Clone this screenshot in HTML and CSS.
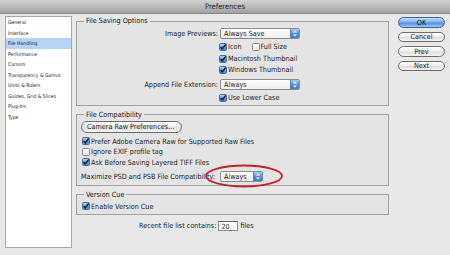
FILE: index.html
```html
<!DOCTYPE html>
<html>
<head>
<meta charset="utf-8">
<link rel="stylesheet" href="styles.css">
</head>
<body>
<div class="titlebar">Preferences</div>
<div class="main">
  <ul class="sidebar">
    <li>General</li>
    <li>Interface</li>
    <li class="sel">File Handling</li>
    <li>Performance</li>
    <li>Cursors</li>
    <li>Transparency &amp; Gamut</li>
    <li>Units &amp; Rulers</li>
    <li>Guides, Grid &amp; Slices</li>
    <li>Plug-Ins</li>
    <li>Type</li>
  </ul>

  <div class="content">
    <fieldset class="group fso">
      <legend>File Saving Options</legend>
      <div class="row r1">
        <span class="lbl">Image Previews:</span>
        <span class="popup"><span class="ptext">Always Save</span><span class="stepper"><svg viewBox="0 0 8 9" width="8" height="9"><path d="M2 3.6 4 1.4 6 3.6Z M2 5.4 4 7.6 6 5.4Z" fill="#fff"/></svg></span></span>
      </div>
      <div class="row r2">
        <span class="spacer"></span>
        <span class="cb on"><svg viewBox="0 0 8 8"><path d="M1.6 4.1 3.3 6 6.7 1.3" fill="none" stroke="#101828" stroke-width="1.4"/></svg></span><span>Icon</span>
        <span class="cb off gap"></span><span>Full Size</span>
      </div>
      <div class="row r3">
        <span class="spacer"></span>
        <span class="cb on"><svg viewBox="0 0 8 8"><path d="M1.6 4.1 3.3 6 6.7 1.3" fill="none" stroke="#101828" stroke-width="1.4"/></svg></span><span>Macintosh Thumbnail</span>
      </div>
      <div class="row r4">
        <span class="spacer"></span>
        <span class="cb on"><svg viewBox="0 0 8 8"><path d="M1.6 4.1 3.3 6 6.7 1.3" fill="none" stroke="#101828" stroke-width="1.4"/></svg></span><span>Windows Thumbnail</span>
      </div>
      <div class="row r5">
        <span class="lbl">Append File Extension:</span>
        <span class="popup"><span class="ptext">Always</span><span class="stepper"><svg viewBox="0 0 8 9" width="8" height="9"><path d="M2 3.6 4 1.4 6 3.6Z M2 5.4 4 7.6 6 5.4Z" fill="#fff"/></svg></span></span>
      </div>
      <div class="row r6">
        <span class="spacer"></span>
        <span class="cb on"><svg viewBox="0 0 8 8"><path d="M1.6 4.1 3.3 6 6.7 1.3" fill="none" stroke="#101828" stroke-width="1.4"/></svg></span><span>Use Lower Case</span>
      </div>
    </fieldset>

    <fieldset class="group compat">
      <legend>File Compatibility</legend>
      <div class="pill crp">Camera Raw Preferences...</div>
      <div class="crow c1">
        <span class="cb on"><svg viewBox="0 0 8 8"><path d="M1.6 4.1 3.3 6 6.7 1.3" fill="none" stroke="#101828" stroke-width="1.4"/></svg></span><span>Prefer Adobe Camera Raw for Supported Raw Files</span>
      </div>
      <div class="crow">
        <span class="cb off"></span><span>Ignore EXIF profile tag</span>
      </div>
      <div class="crow">
        <span class="cb on"><svg viewBox="0 0 8 8"><path d="M1.6 4.1 3.3 6 6.7 1.3" fill="none" stroke="#101828" stroke-width="1.4"/></svg></span><span>Ask Before Saving Layered TIFF Files</span>
      </div>
      <div class="row maxrow">
        <span class="maxlbl">Maximize PSD and PSB File Compatibility:</span>
        <span class="popup small"><span class="ptext">Always</span><span class="stepper"><svg viewBox="0 0 8 9" width="8" height="9"><path d="M2 3.6 4 1.4 6 3.6Z M2 5.4 4 7.6 6 5.4Z" fill="#fff"/></svg></span></span>
        <svg class="ring" viewBox="0 0 80 24" width="80" height="24"><ellipse cx="40" cy="12" rx="38" ry="10.5" fill="none" stroke="#c8202b" stroke-width="1.8"/></svg>
      </div>
    </fieldset>

    <fieldset class="group vc">
      <legend>Version Cue</legend>
      <div class="crow vrow">
        <span class="cb on"><svg viewBox="0 0 8 8"><path d="M1.6 4.1 3.3 6 6.7 1.3" fill="none" stroke="#101828" stroke-width="1.4"/></svg></span><span>Enable Version Cue</span>
      </div>
    </fieldset>

    <div class="recent">
      <span>Recent file list contains:</span>
      <span class="field">20</span>
      <span>files</span>
    </div>
  </div>

  <div class="buttons">
    <div class="pill btn ok">OK</div>
    <div class="pill btn">Cancel</div>
    <div class="pill btn">Prev</div>
    <div class="pill btn">Next</div>
  </div>
</div>
</body>
</html>
```

FILE: styles.css
```css
* { box-sizing: border-box; }

body {
  margin: 0;
  width: 450px;
  height: 255px;
  overflow: hidden;
  background: #e8e8e8;
  font-family: "DejaVu Sans Condensed", "Liberation Sans", sans-serif;
  font-size: 7.2px;
  color: #1c1c1c;
}

.titlebar {
  height: 14px;
  background: linear-gradient(#d2d2d2, #a2a2a2);
  border-bottom: 1px solid #858585;
  text-align: center;
  line-height: 13px;
  font-size: 7.6px;
  color: #1e1e1e;
}

.main {
  display: flex;
  align-items: flex-start;
}

.sidebar {
  list-style: none;
  margin: 2px 0 0 5px;
  padding: 0;
  width: 67px;
  height: 232px;
  background: #fff;
  border: 1px solid #a8a8a8;
  font-size: 5.1px;
  color: #222;
}

.sidebar li {
  height: 10.5px;
  line-height: 10.5px;
  padding-left: 2px;
  white-space: nowrap;
}

.sidebar li.sel { background: #b6d2f4; }

.content {
  margin-left: 4px;
  width: 313px;
}

.group {
  margin: 2px 0 0;
  padding: 0;
  min-width: 0;
  border: 1px solid #a2a2a2;
  background: #e4e4e4;
}

.group legend {
  margin-left: 7px;
  padding: 0 2px;
  height: 10px;
  line-height: 10px;
  color: #111;
}

.row {
  display: flex;
  align-items: center;
  height: 11px;
  white-space: nowrap;
}

.lbl {
  width: 141px;
  flex: none;
  margin-right: 2px;
  text-align: right;
}

.spacer { width: 142px; flex: none; }

.fso .r1 { margin-top: 2px; }
.fso .r2 { margin-top: 2px; }
.fso .r3 { margin-top: 1px; }
.fso .r5 { margin-top: 4px; }
.fso .r6 { margin-top: 2px; }
.fso { padding-bottom: 1.5px; }

.popup {
  display: flex;
  align-items: center;
  flex: none;
  width: 80px;
  height: 11px;
  border: 1px solid #8c8c8c;
  border-radius: 2px;
  background: linear-gradient(#ffffff, #ededed);
  overflow: hidden;
}

.popup.small { width: 43px; }

.ptext {
  flex: 1;
  padding-left: 3px;
  line-height: 9px;
}

.stepper {
  width: 9px;
  height: 9px;
  display: flex;
  align-items: center;
  justify-content: center;
  background: linear-gradient(#a8cbf3, #4a8ad8 55%, #3e7fd2);
  border-left: 1px solid #5a7fb0;
}

.stepper svg { display: block; }

.cb {
  flex: none;
  width: 8px;
  height: 8px;
  margin-right: 1px;
  border-radius: 1.5px;
  display: inline-flex;
}

.cb svg { width: 8px; height: 8px; display: block; }

.cb.on {
  background: linear-gradient(#b3d4f7, #5a96dc 55%, #4a88d6);
  border: 1px solid #4b6d9c;
}

.cb.on svg { margin: -1px; }

.cb.off {
  background: linear-gradient(#fafafa, #e8e8e8);
  border: 1px solid #8a8a8a;
}

.cb.gap { margin-left: 10px; }

.pill {
  display: flex;
  align-items: center;
  justify-content: center;
  border: 1px solid #6e6e6e;
  border-radius: 6px;
  background: linear-gradient(#ffffff, #f0f0f0 45%, #dedede 55%, #f5f5f5);
  white-space: nowrap;
}

.crp {
  margin: 1px 0 0 4px;
  width: 101px;
  height: 12px;
  justify-content: flex-start;
  padding-left: 5px;
}

.crow {
  display: flex;
  align-items: center;
  height: 10.5px;
  padding-left: 5px;
  white-space: nowrap;
}

.c1 { margin-top: 3.5px; }

.maxrow {
  position: relative;
  margin-top: 3px;
  padding-left: 4px;
}

.maxlbl { width: 139px; flex: none; }

.ring {
  position: absolute;
  left: 127px;
  top: -6.5px;
  overflow: visible;
}

.compat { padding-bottom: 3px; margin-top: 4px; }

.vc { margin-top: 4px; padding-bottom: 2.5px; }

.vrow { margin-top: 1px; height: 11px; }

.recent {
  display: flex;
  align-items: center;
  height: 11px;
  margin-top: 5px;
  padding-left: 63px;
  white-space: nowrap;
}

.field {
  width: 20px;
  height: 10px;
  margin: 0 2px;
  padding-left: 2px;
  line-height: 9px;
  background: #fff;
  border: 1px solid #8c8c8c;
  border-top-color: #666;
}

.buttons {
  margin: 3px 0 0 9px;
  width: 47px;
  display: flex;
  flex-direction: column;
  gap: 4px;
}

.btn {
  height: 10.5px;
  color: #1a1a1a;
}

.btn.ok {
  background: linear-gradient(#c4def9, #7fb2ec 45%, #4f92e0 55%, #93c8f8);
  border-color: #3f66a0;
  color: #0d1420;
}
```
